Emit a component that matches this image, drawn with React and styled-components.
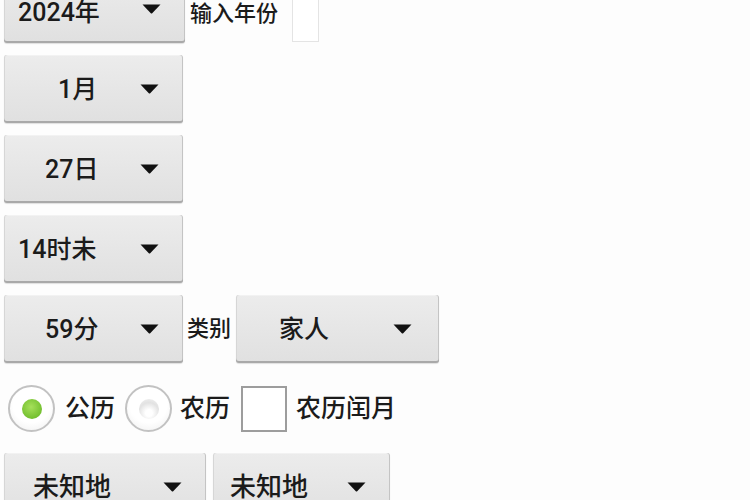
import React from "react";
import styled, { createGlobalStyle } from "styled-components";

const GlobalStyle = createGlobalStyle`
  html, body {
    margin: 0;
    padding: 0;
    background: #fdfdfd;
    overflow: hidden;
  }
  body {
    font-family: Roboto, "Noto Sans CJK SC", "Noto Sans", sans-serif;
    color: #1b1b1b;
  }
`;

const Page = styled.div`
  display: flex;
  flex-direction: column;
  padding-left: 4px;
  margin-top: -25px;
  width: 750px;
  height: 525px;
  box-sizing: border-box;
`;

const Row = styled.div`
  display: flex;
  align-items: ${(p) => p.$align || "center"};
  margin-top: ${(p) => p.$gap || 0}px;
`;

const SpinnerBox = styled.div`
  display: flex;
  align-items: center;
  box-sizing: border-box;
  width: ${(p) => p.$w}px;
  height: 68px;
  margin-left: ${(p) => p.$ml || 0}px;
  padding-left: ${(p) => p.$pad}px;
  padding-right: ${(p) => p.$pr || 24}px;
  border-radius: 3px;
  background: linear-gradient(#ececec, #e0e0e0);
  box-shadow: inset 0 -2px 0 #a9a9a9, inset -1px 0 0 #c4c4c4,
    inset 1px 0 0 #d6d6d6, inset 0 1px 0 #f2f2f2, 0 1px 1px rgba(0, 0, 0, 0.12);
`;

const SpinnerText = styled.span`
  flex: 1;
  font-size: ${(p) => p.$size || 25}px;
  font-weight: 500;
  line-height: 1;
  white-space: nowrap;
  margin-top: ${(p) => p.$dy || 0}px;
`;

const Label = styled.span`
  font-size: 22px;
  font-weight: 500;
  line-height: 1;
  margin-left: ${(p) => p.$ml || 4}px;
  margin-top: ${(p) => p.$mt || 0}px;
  white-space: nowrap;
`;

const InputBox = styled.div`
  width: 27px;
  height: 67px;
  margin-left: 14px;
  box-sizing: border-box;
  border: 1px solid #e4e4e4;
  border-top: none;
  background: #fff;
  align-self: flex-start;
`;

const Radio = styled.div`
  width: 47px;
  height: 47px;
  box-sizing: border-box;
  border-radius: 50%;
  border: 2px solid #c2c2c2;
  background: radial-gradient(circle at 50% 40%, #ffffff 55%, #ededed 100%);
  display: flex;
  align-items: center;
  justify-content: center;
  margin-left: ${(p) => p.$ml || 0}px;
`;

const Dot = styled.div`
  width: 20px;
  height: 20px;
  border-radius: 50%;
  background: ${(p) =>
    p.$on
      ? "radial-gradient(circle at 45% 40%, #a6e05a, #74c030 70%, #62a826)"
      : "radial-gradient(circle at 50% 70%, #ffffff 20%, #e2e2e2 60%, #f4f4f4)"};
`;

const OptionText = styled.span`
  font-size: 25px;
  font-weight: 500;
  line-height: 1;
  margin-left: ${(p) => p.$ml}px;
  white-space: nowrap;
`;

const CheckBox = styled.div`
  width: 46px;
  height: 46px;
  box-sizing: border-box;
  border: 2px solid #9d9d9d;
  background: #fff;
  margin-left: ${(p) => p.$ml}px;
`;

const Arrow = () => (
  <svg width="19" height="10" viewBox="0 0 19 10">
    <path d="M0.5 0.5 L18.5 0.5 L10.2 9.2 Q9.5 9.8 8.8 9.2 Z" fill="#111" />
  </svg>
);

const Spinner = ({ text, w = 180, pad, ml, pr, size, dy }) => (
  <SpinnerBox $w={w} $pad={pad} $ml={ml} $pr={pr}>
    <SpinnerText $size={size} $dy={dy}>
      {text}
    </SpinnerText>
    <Arrow />
  </SpinnerBox>
);

export default function App() {
  return (
    <>
      <GlobalStyle />
      <Page>
        <Row>
          <Spinner text="2024年" w={181} pad={14} dy={6} />
          <Label $ml={5} $mt={10}>输入年份</Label>
          <InputBox />
        </Row>
        <Row $gap={12}>
          <Spinner text="1月" w={179} pad={54} />
        </Row>
        <Row $gap={12}>
          <Spinner text="27日" w={179} pad={41} />
        </Row>
        <Row $gap={12}>
          <Spinner text="14时未" w={179} pad={14} />
        </Row>
        <Row $gap={12}>
          <Spinner text="59分" w={179} pad={41} />
          <Label $ml={4}>类别</Label>
          <Spinner text="家人" w={203} pad={43} ml={5} pr={27} />
        </Row>
        <Row $gap={22}>
          <Radio $ml={4}>
            <Dot $on />
          </Radio>
          <OptionText $ml={10}>公历</OptionText>
          <Radio $ml={10}>
            <Dot />
          </Radio>
          <OptionText $ml={8}>农历</OptionText>
          <CheckBox $ml={11} />
          <OptionText $ml={9}>农历闰月</OptionText>
        </Row>
        <Row $gap={21} $align="flex-start">
          <Spinner text="未知地" w={202} pad={29} size={26} />
          <Spinner text="未知地" w={177} pad={17} ml={7} size={26} />
        </Row>
      </Page>
    </>
  );
}
